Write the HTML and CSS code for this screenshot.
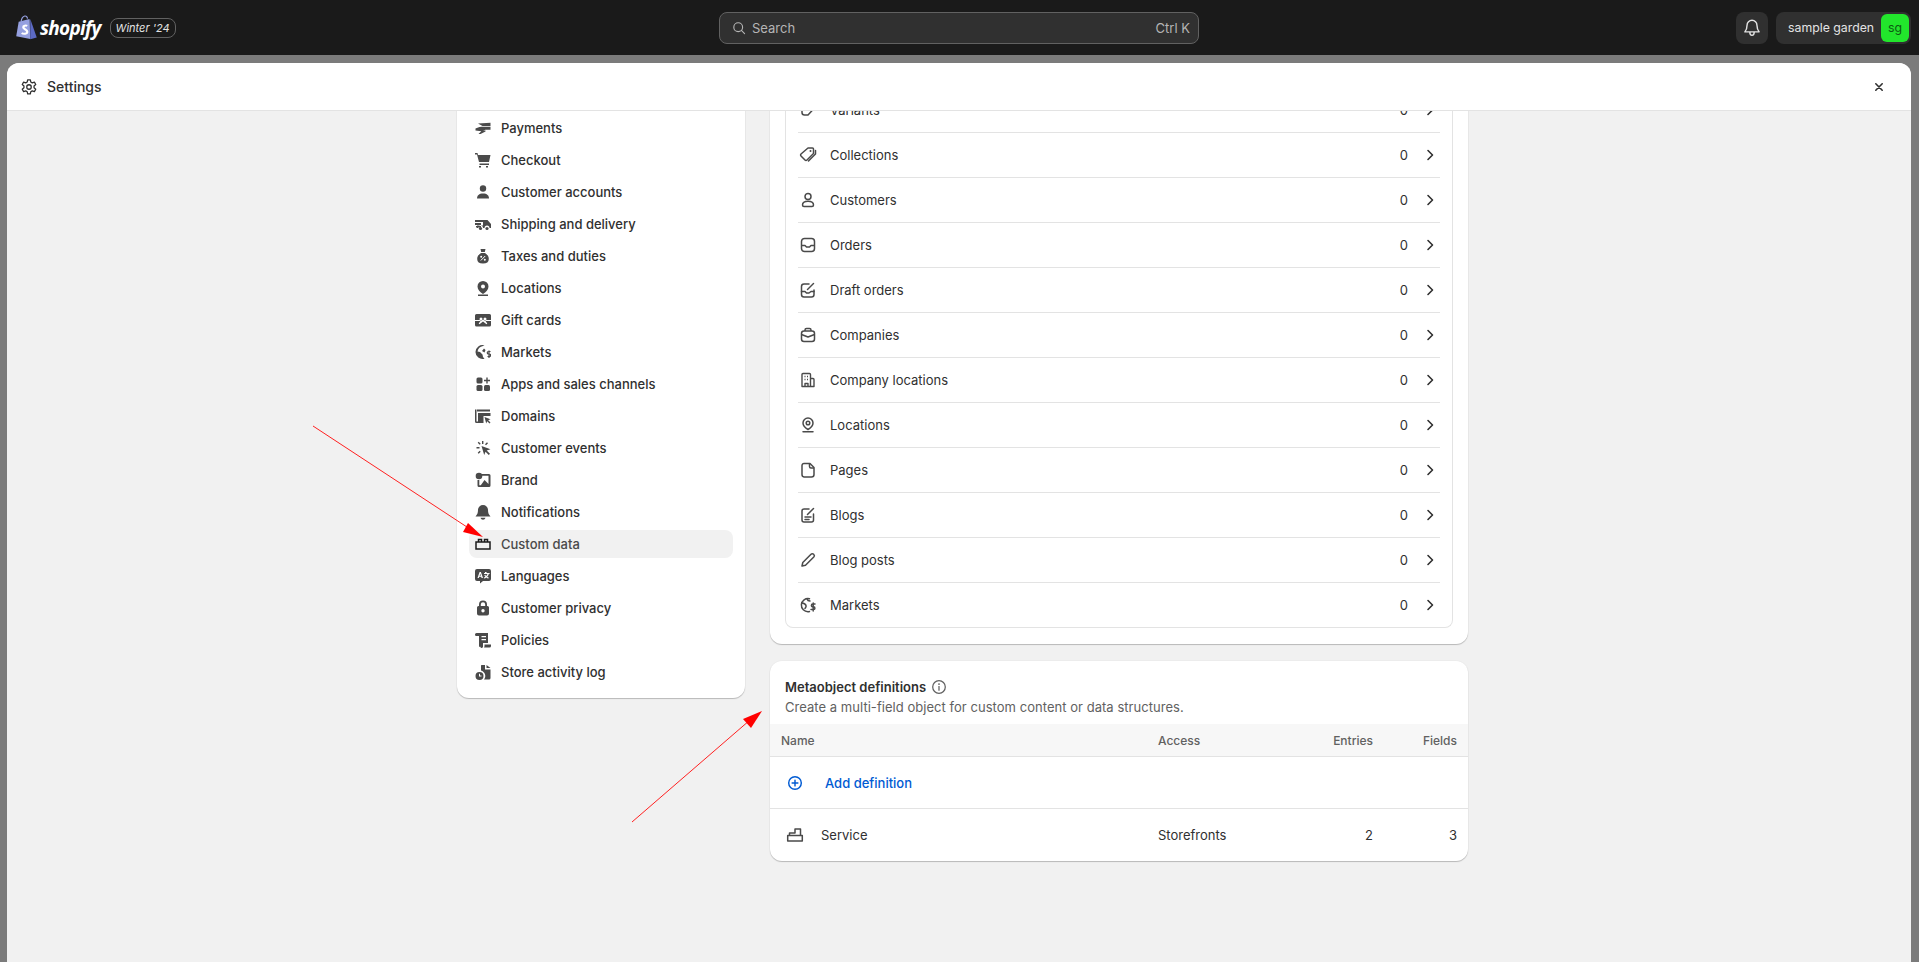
FILE: index.html

```html
<!DOCTYPE html>
<html lang="en">
<head>
  <meta charset="UTF-8" />
  <title>Settings - Custom data</title>
  <link rel="stylesheet" href="styles.css">
</head>
<body>
  <svg width="0" height="0" class="defs">
    <symbol id="i-chev" viewBox="0 0 20 20"><path d="M8 5.500l4.500 4.500-4.500 4.500" fill="none" stroke="#303030" stroke-width="1.600" stroke-linecap="round" stroke-linejoin="round"/></symbol>
    <symbol id="i-market" viewBox="0 0 20 20"><g fill="none" stroke="#4a4a4a" stroke-width="1.500" stroke-linecap="round" stroke-linejoin="round"><path d="M11.500 3.700a6.600 6.600 0 1 0-1 13 6.600 6.600 0 0 0 1-.2"/><path d="M4 8c2 .2 3.500 1 4 2.500s-.5 2-1 3M9 4c.5 1.500 1.500 2 3 2"/><path d="M17 9h-2.200a1.300 1.300 0 0 0 0 2.800h.7a1.300 1.300 0 0 1 0 2.800H13M15.200 8v8"/></g></symbol>
  </svg>

  <header class="topbar">
    <div class="brand">
      <svg class="bag" viewBox="0 0 18 24" width="22" height="25" preserveAspectRatio="none"><path d="M1 20.500L3 6.500l8-2.500 1 0 .5 19z" fill="#95a0e0"/><path d="M12.500 3.800L17.800 21.500l-5.300 1.800z" fill="#5c6ac4"/><path d="M5 6c.3-2 1.500-4.500 3-5 1.500-.3 2 1 2.300 2.500" fill="none" stroke="#95a0e0" stroke-width="1"/><path d="M10 10.500c-1-.5-3.200-.6-3.200 1.300 0 2 3.200 2 3.200 4.200 0 2.200-3 2.500-4.500 1.300" fill="none" stroke="#fff" stroke-width="1.900"/></svg>
      <span class="wordmark">shopify</span>
      <span class="edition">Winter '24</span>
    </div>
    <div class="search">
      <svg viewBox="0 0 20 20" width="16" height="16"><circle cx="9" cy="9" r="5.500" fill="none" stroke="#b5b5b5" stroke-width="1.400"/><path d="M13 13l4 4" stroke="#b5b5b5" stroke-width="1.400" stroke-linecap="round"/></svg>
      <span class="search-text">Search</span>
      <span class="search-key">Ctrl K</span>
    </div>
    <div class="top-actions">
      <button class="bell">
        <svg viewBox="0 0 20 20" width="22" height="22"><path d="M10 3a4.500 4.500 0 0 0-4.500 4.500c0 3-.7 4.500-2 6h13c-1.300-1.500-2-3-2-6A4.500 4.500 0 0 0 10 3zM8 13.700c0 1.800.8 3 2 3s2-1.200 2-3" fill="none" stroke="#e3e3e3" stroke-width="1.300" stroke-linejoin="round"/></svg>
      </button>
      <div class="store">
        <span>sample garden</span>
        <span class="avatar">sg</span>
      </div>
    </div>
  </header>

  <main class="modal">
    <div class="modal-head">
      <svg viewBox="0 0 20 20" width="18" height="18"><g fill="none" stroke="#303030" stroke-width="1.400" stroke-linejoin="round"><circle cx="10" cy="10" r="2.500"/><path d="M8.500 2h3l.5 2.500 1.600.9 2.400-.8 1.500 2.600-1.900 1.700v1.900l1.900 1.700-1.500 2.600-2.400-.8-1.600.9-.5 2.500h-3l-.5-2.500-1.600-.9-2.400.8-1.500-2.600 1.900-1.700V8.900L2.500 7.200 4 4.600l2.400.8L8 4.500z"/></g></svg>
      <h1>Settings</h1>
      <svg class="close" viewBox="0 0 20 20" width="16" height="16"><path d="M6 6l8 8M14 6l-8 8" stroke="#303030" stroke-width="2" stroke-linecap="round"/></svg>
    </div>

    <div class="modal-body">
      <div class="columns">
        <nav class="side card">
          <a class="side-item"><svg viewBox="0 0 16 16"><path d="M3 3.500L15.500 2.700V6H7.500zM.5 8.500C3 7 6 6.700 9 6.700h6.500v3H10.500L8 10.500h2.500v1L5.500 14H3.500l2.800-2.800-5.800-.7z"/></svg>Payments</a>
          <a class="side-item"><svg viewBox="0 0 16 16"><path d="M0 1h2.500l.5 2h12.500l-1.500 7H4L2 2.500H0zM4.500 11.500H14V13H4.500zM4 14h2v1.500H4zM11 14h2v1.500h-2z"/></svg>Checkout</a>
          <a class="side-item"><svg viewBox="0 0 16 16"><circle cx="8" cy="4.500" r="3.200"/><path d="M2 14.500c0-3 2-5 6-5s6 2 6 5z"/></svg>Customer accounts</a>
          <a class="side-item"><svg viewBox="0 0 16 16"><path d="M0 4h10v2H0zM0 7h6v2H0zM1 10h5v1.500H1zM10 4h2.500L16 8v4h-1.500a2.500 2.500 0 0 0-5 0H8a2.500 2.500 0 0 0-5 0H2V9.500h6V6h2z"/><circle cx="5.500" cy="12.500" r="1.600"/><circle cx="12" cy="12.500" r="1.600"/></svg>Shipping and delivery</a>
          <a class="side-item"><svg viewBox="0 0 16 16"><path d="M5.500 1h5L9.800 4H6.200zM6 5h4c2.500 1.500 3.800 3.500 3.800 6 0 3-2 4.500-5.800 4.500S2.200 14 2.200 11C2.200 8.500 3.500 6.500 6 5z"/><path d="M5.800 12.500l4.400-4.500" stroke="#fff" stroke-width="1"/><circle cx="6.200" cy="8.800" r="1" fill="#fff"/><circle cx="9.800" cy="11.800" r="1" fill="#fff"/></svg>Taxes and duties</a>
          <a class="side-item"><svg viewBox="0 0 16 16"><path fill-rule="evenodd" d="M8 1a5.500 5.500 0 0 1 5.500 5.500c0 3-2.500 5.500-5.500 7.500-3-2-5.500-4.500-5.500-7.500A5.500 5.500 0 0 1 8 1zm0 3.500a2 2 0 1 0 0 4 2 2 0 0 0 0-4z"/><path d="M3 14.500h10V16H3z"/></svg>Locations</a>
          <a class="side-item"><svg viewBox="0 0 16 16"><path fill-rule="evenodd" d="M1.500 2H14.500A1.500 1.500 0 0 1 16 3.500V13a1.500 1.500 0 0 1-1.500 1.500H1.500A1.500 1.500 0 0 1 0 13V3.500A1.500 1.500 0 0 1 1.500 2zM6 5.500a1.500 1.500 0 1 0 0 3 1.500 1.500 0 0 0 0-3zm4 0a1.500 1.500 0 1 0 0 3 1.500 1.500 0 0 0 0-3zM0 8v1h5.500l-1.800 2.500.8.700L8 9.500l3.500 2.700.8-.7L10.500 9H16V8z"/></svg>Gift cards</a>
          <a class="side-item"><svg viewBox="0 0 16 16"><path d="M9.500 1.300a7 7 0 1 0 0 13.400L8 13l-.5-2.500L5 8 2.500 7.500C3 4.500 5 2.500 8 2zM9 4.500l-2 2.500 2.500 1.500 1-2.500z"/><path d="M15.500 7.500h-2a1 1 0 0 0 0 2.500h.8a1 1 0 0 1 0 2.500H12.500M14 6.500V14" fill="none" stroke="#4a4a4a" stroke-width="1.200"/></svg>Markets</a>
          <a class="side-item"><svg viewBox="0 0 16 16"><rect x="1.500" y="1.500" width="6" height="6" rx="1.500"/><rect x="1.500" y="9" width="6" height="6" rx="1.500"/><rect x="9" y="9" width="6" height="6" rx="1.500"/><path d="M11.300 1.500h1.400v2.300H15v1.400h-2.300v2.300h-1.400V5.200H9V3.800h2.300z"/></svg>Apps and sales channels</a>
          <a class="side-item"><svg viewBox="0 0 16 16"><path d="M2 1.500h13v2H2zM0 1.500h1.500v12H4V15H1.500A1.500 1.500 0 0 1 0 13.500zM3 5h12.500v3H8.500v7H4.500A1.500 1.500 0 0 1 3 13.500z"/><path d="M9.500 9l6 2.200-2.300 1 2.300 2.300-1 1-2.300-2.300-1 2.300z"/></svg>Domains</a>
          <a class="side-item"><svg viewBox="0 0 16 16"><path d="M6.500 6l9 3.200-3.800 1.300 3.300 3.300-1.200 1.200-3.300-3.300L9.200 15zM7 1h1.400v3H7zM1.500 7h3v1.400h-3zM2.700 2.700l1-1 2 2-1 1zM2.700 12.700l2-2 1 1-2 2zM12 2.200l1 1-2 2-1-1z"/></svg>Customer events</a>
          <a class="side-item"><svg viewBox="0 0 16 16"><path fill-rule="evenodd" d="M6 2h8a1.500 1.500 0 0 1 1.500 1.500v10A1.500 1.500 0 0 1 14 15H4a1.500 1.500 0 0 1-1.500-1.500V8h1.800v5.200h1.500L9.500 8l4 4V3.800H7z"/><circle cx="4" cy="4" r="3.300"/></svg>Brand</a>
          <a class="side-item"><svg viewBox="0 0 16 16"><path d="M8 1a5 5 0 0 1 5 5c0 3 .8 4.500 2.500 6.500h-15C2.200 10.500 3 9 3 6a5 5 0 0 1 5-5zM5.500 13.800h5c-.4 1.300-1.300 2-2.500 2s-2.100-.7-2.500-2z"/></svg>Notifications</a>
          <a class="side-item active"><svg viewBox="0 0 16 16"><path d="M1 6h14v7H1zM3.500 5.500V3.500h3v2M9.500 5.500V3.500h3v2" fill="none" stroke="#1a1a1a" stroke-width="1.500"/></svg>Custom data</a>
          <a class="side-item"><svg viewBox="0 0 16 16"><path fill-rule="evenodd" d="M2 1h12a2 2 0 0 1 2 2v8a2 2 0 0 1-2 2H8l-3 2.500V13H2a2 2 0 0 1-2-2V3a2 2 0 0 1 2-2zm2.600 3L2.500 10h1.300l.4-1.200h2l.4 1.200H8L5.900 4zm.7 1.800l.6 2H4.600zM10 4v1H9v1h3.500c-.3.800-.8 1.500-1.300 2-.4-.3-.7-.7-1-1.200l-.9.400c.3.600.7 1.100 1.100 1.500-.5.400-1 .6-1.600.8l.4 1c.8-.3 1.500-.6 2.100-1.100.6.500 1.300.8 2.100 1.100l.4-1c-.6-.2-1.100-.4-1.600-.8.700-.7 1.300-1.600 1.600-2.700h.8V5h-3V4z"/></svg>Languages</a>
          <a class="side-item"><svg viewBox="0 0 16 16"><path fill-rule="evenodd" d="M8 .5a4 4 0 0 1 4 4V6h.5A1.500 1.500 0 0 1 14 7.500v6a2 2 0 0 1-2 2H4a2 2 0 0 1-2-2v-6A1.500 1.500 0 0 1 3.500 6H4V4.500a4 4 0 0 1 4-4zm0 1.800a2.200 2.200 0 0 0-2.200 2.200V6h4.400V4.500A2.200 2.200 0 0 0 8 2.300zM8 9a1.700 1.700 0 1 0 0 3.400A1.700 1.700 0 0 0 8 9z"/></svg>Customer privacy</a>
          <a class="side-item"><svg viewBox="0 0 16 16"><path fill-rule="evenodd" d="M1.500 1H13v10H8v3.500a1.300 1.300 0 0 1-2.600.2H4V4H1.800A1.500 1.500 0 0 1 0 2.500 1.500 1.500 0 0 1 1.500 1zM6.500 4v1.300h4.500V4zm0 3v1.300h4.500V7zM9.500 12.500H16V14a1.500 1.500 0 0 1-1.500 1.500H9a3 3 0 0 0 .5-1.500z"/></svg>Policies</a>
          <a class="side-item"><svg viewBox="0 0 16 16"><path d="M6.500 1H10v4.500h5.500V14A1.500 1.500 0 0 1 14 15.500H9a5.500 5.500 0 0 0-3-8.900V1.500zM11.500 1l4 3h-4z"/><path fill-rule="evenodd" d="M4.500 8a4 4 0 1 1 0 8 4 4 0 0 1 0-8zM4 9.800v2.700h2.500v-1H5V9.800z"/></svg>Store activity log</a>
        </nav>

        <section class="content">
          <div class="card counts">
            <div class="count-box">
              <div class="count-row"><svg class="ico" viewBox="0 0 20 20"><path d="M4 5l7-1.500 5 5-6 6.500H6.500A2.500 2.500 0 0 1 4 12.500z" fill="none" stroke="#4a4a4a" stroke-width="1.500"/></svg><span class="count-name">Variants</span><span class="count-num">0</span><svg class="chev"><use href="#i-chev"/></svg></div>
              <div class="count-row"><svg class="ico" viewBox="0 0 20 20"><g fill="none" stroke="#4a4a4a" stroke-width="1.500" stroke-linejoin="round" stroke-linecap="round"><path d="M10 3h4.500a1 1 0 0 1 1 1v4.500l-6.500 6.500a1.400 1.400 0 0 1-2 0L3 11a1.400 1.400 0 0 1 0-2z"/><path d="M17.500 5.500v3.500l-7 7"/></g><circle cx="12.500" cy="6" r="1" fill="#4a4a4a"/></svg><span class="count-name">Collections</span><span class="count-num">0</span><svg class="chev"><use href="#i-chev"/></svg></div>
              <div class="count-row"><svg class="ico" viewBox="0 0 20 20"><g fill="none" stroke="#4a4a4a" stroke-width="1.500" stroke-linejoin="round"><circle cx="10" cy="6.500" r="3"/><path d="M4.500 15c0-2.500 2.500-3.800 5.500-3.800s5.500 1.300 5.500 3.800c0 1-.7 1.500-1.500 1.500H6c-.8 0-1.500-.5-1.500-1.500z"/></g></svg><span class="count-name">Customers</span><span class="count-num">0</span><svg class="chev"><use href="#i-chev"/></svg></div>
              <div class="count-row"><svg class="ico" viewBox="0 0 20 20"><g fill="none" stroke="#4a4a4a" stroke-width="1.500" stroke-linejoin="round"><rect x="3.500" y="3.500" width="13" height="13" rx="3"/><path d="M3.500 10.500h3.500l1.500 1.500h3l1.500-1.500h3.500"/></g></svg><span class="count-name">Orders</span><span class="count-num">0</span><svg class="chev"><use href="#i-chev"/></svg></div>
              <div class="count-row"><svg class="ico" viewBox="0 0 20 20"><g fill="none" stroke="#4a4a4a" stroke-width="1.500" stroke-linejoin="round" stroke-linecap="round"><path d="M11 4H6a2.500 2.500 0 0 0-2.500 2.500v8A2.500 2.500 0 0 0 6 17h7.500a2.500 2.500 0 0 0 2.500-2.500V10"/><path d="M3.500 11.500H7l1.500 1.500h2.500l2-1.500h3"/><path d="M9.500 9.500L15.500 3.500"/></g></svg><span class="count-name">Draft orders</span><span class="count-num">0</span><svg class="chev"><use href="#i-chev"/></svg></div>
              <div class="count-row"><svg class="ico" viewBox="0 0 20 20"><g fill="none" stroke="#4a4a4a" stroke-width="1.500" stroke-linejoin="round"><rect x="3.500" y="6" width="13" height="10.500" rx="2.500"/><path d="M7 6V5a1.500 1.500 0 0 1 1.500-1.500h3A1.500 1.500 0 0 1 13 5v1M3.500 9.500L10 12l6.500-2.500"/></g></svg><span class="count-name">Companies</span><span class="count-num">0</span><svg class="chev"><use href="#i-chev"/></svg></div>
              <div class="count-row"><svg class="ico" viewBox="0 0 20 20"><g fill="none" stroke="#4a4a4a" stroke-width="1.400" stroke-linejoin="round"><path d="M4 16.500V4.500a1 1 0 0 1 1-1h6.500a1 1 0 0 1 1 1v12zM12.500 8.500h2.500a1 1 0 0 1 1 1v7h-3.500M7 16.500v-3h3v3M6.500 6.500h1M9 6.500h1M6.500 9.500h1M9 9.500h1"/></g></svg><span class="count-name">Company locations</span><span class="count-num">0</span><svg class="chev"><use href="#i-chev"/></svg></div>
              <div class="count-row"><svg class="ico" viewBox="0 0 20 20"><g fill="none" stroke="#4a4a4a" stroke-width="1.500" stroke-linejoin="round" stroke-linecap="round"><path d="M10 3a5 5 0 0 1 5 5c0 2.500-2 4.700-5 6.500C7 12.700 5 10.500 5 8a5 5 0 0 1 5-5z"/><circle cx="10" cy="8" r="1.800"/><path d="M5 16.800h10"/></g></svg><span class="count-name">Locations</span><span class="count-num">0</span><svg class="chev"><use href="#i-chev"/></svg></div>
              <div class="count-row"><svg class="ico" viewBox="0 0 20 20"><g fill="none" stroke="#4a4a4a" stroke-width="1.500" stroke-linejoin="round"><path d="M6 3.500h6l4 4v7A2.500 2.500 0 0 1 13.500 17h-7.500A2.500 2.500 0 0 1 4 14.500V5.500a2 2 0 0 1 2-2z"/><path d="M11.500 3.500v3a1.500 1.500 0 0 0 1.500 1.500h3"/></g></svg><span class="count-name">Pages</span><span class="count-num">0</span><svg class="chev"><use href="#i-chev"/></svg></div>
              <div class="count-row"><svg class="ico" viewBox="0 0 20 20"><g fill="none" stroke="#4a4a4a" stroke-width="1.500" stroke-linejoin="round" stroke-linecap="round"><path d="M11 4H6a2 2 0 0 0-2 2v9a2 2 0 0 0 2 2h7.500a2 2 0 0 0 2-2v-6"/><path d="M9.500 9.500L15.500 3.500M7 12h6M7 14.500h4"/></g></svg><span class="count-name">Blogs</span><span class="count-num">0</span><svg class="chev"><use href="#i-chev"/></svg></div>
              <div class="count-row"><svg class="ico" viewBox="0 0 20 20"><path d="M4 16l.8-3.500L13 4.300a1.800 1.800 0 0 1 2.600 0l.2.200a1.800 1.800 0 0 1 0 2.500L7.500 15.200z" fill="none" stroke="#4a4a4a" stroke-width="1.500" stroke-linejoin="round"/></svg><span class="count-name">Blog posts</span><span class="count-num">0</span><svg class="chev"><use href="#i-chev"/></svg></div>
              <div class="count-row"><svg class="ico"><use href="#i-market"/></svg><span class="count-name">Markets</span><span class="count-num">0</span><svg class="chev"><use href="#i-chev"/></svg></div>
            </div>
          </div>

          <div class="card meta">
            <div class="meta-head">
              <h2>Metaobject definitions
                <svg viewBox="0 0 20 20" width="18" height="18"><circle cx="10" cy="10" r="7" fill="none" stroke="#616161" stroke-width="1.400"/><circle cx="10" cy="6.800" r="1" fill="#616161"/><path d="M10 9.500v4" stroke="#616161" stroke-width="1.400" stroke-linecap="round"/></svg>
              </h2>
              <p>Create a multi-field object for custom content or data structures.</p>
            </div>
            <div class="meta-row meta-labels">
              <span class="col-name">Name</span><span class="col-access">Access</span><span class="col-entries">Entries</span><span class="col-fields">Fields</span>
            </div>
            <a class="add-row">
              <svg viewBox="0 0 20 20" width="18" height="18"><circle cx="10" cy="10" r="7" fill="none" stroke="#005bd3" stroke-width="1.600"/><path d="M10 6.800v6.400M6.800 10h6.400" stroke="#005bd3" stroke-width="1.600" stroke-linecap="round"/></svg>
              Add definition
            </a>
            <div class="meta-row service">
              <span class="col-name"><svg viewBox="0 0 20 20" width="20" height="20"><path d="M2.700 16V10.500h14.600V16zM4.500 10.500V8H10V4h5.500v6.500" fill="none" stroke="#4a4a4a" stroke-width="1.500" stroke-linejoin="round"/></svg>Service</span>
              <span class="col-access">Storefronts</span><span class="col-entries">2</span><span class="col-fields">3</span>
            </div>
          </div>
        </section>
      </div>
    </div>
  </main>

  <!-- annotation arrows drawn on top of the screenshot -->
  <svg class="arrows" width="1919" height="962" viewBox="0 0 1919 962">
    <path d="M313 426L470 529M632 822L750 720" stroke="#ff2020" stroke-width="1" fill="none"/>
    <path d="M483 537L463 532 468 523z" fill="#ff0000"/>
    <path d="M762 711L743 719 751 728z" fill="#ff0000"/>
  </svg>
</body>
</html>
```

FILE: styles.css

```css
* {
  box-sizing: border-box;
}

html, body {
  height: 100%;
}

body {
  margin: 0;
  background: #7b7b7b;
  color: #303030;
  font-family: Inter, "Liberation Sans", sans-serif;
  font-size: 13px;
  display: flex;
  flex-direction: column;
  overflow: hidden;
}

.defs {
  position: absolute;
}

.topbar {
  height: 55px;
  flex: none;
  background: #1a1a1a;
  display: grid;
  grid-template-columns: 704px 480px 1fr;
  align-items: center;
  padding: 0 8px 0 15px;
}

.brand {
  display: flex;
  align-items: center;
}

.wordmark {
  color: #fff;
  font-family: "Open Sans", sans-serif;
  font-weight: 700;
  font-style: italic;
  font-size: 19px;
  letter-spacing: -0.7px;
  margin-left: 3px;
}

.edition {
  margin-left: 9px;
  height: 20px;
  width: 66px;
  border: 1px solid #616161;
  border-radius: 8px;
  color: #e3e3e3;
  font-size: 11px;
  font-style: italic;
  white-space: nowrap;
  display: flex;
  align-items: center;
  justify-content: center;
}

.search {
  height: 32px;
  background: #303030;
  border: 1px solid #616161;
  border-radius: 8px;
  color: #b5b5b5;
  display: flex;
  align-items: center;
  padding: 0 8px 0 11px;
}

.search-text {
  margin-left: 5px;
  flex: 1;
}

.top-actions {
  display: flex;
  justify-content: flex-end;
  gap: 8px;
}

.bell {
  width: 32px;
  height: 32px;
  padding: 0;
  border: 0;
  border-radius: 8px;
  background: #303030;
  display: flex;
  align-items: center;
  justify-content: center;
}

.store {
  width: 135px;
  height: 32px;
  background: #303030;
  border-radius: 8px;
  color: #e3e3e3;
  font-size: 12.3px;
  display: flex;
  align-items: center;
  justify-content: space-between;
  padding: 0 2px 0 12px;
}

.avatar {
  width: 28px;
  height: 28px;
  background: #22e62c;
  border-radius: 6px;
  color: #0c5a12;
  display: flex;
  align-items: center;
  justify-content: center;
}

.modal {
  flex: 1;
  min-height: 0;
  margin: 8px 8px 0 7px;
  background: #f1f1f1;
  border-radius: 12px 12px 0 0;
  display: flex;
  flex-direction: column;
  overflow: hidden;
}

.modal-head {
  height: 48px;
  flex: none;
  background: #fff;
  border-bottom: 1px solid #e3e3e3;
  display: flex;
  align-items: center;
  gap: 9px;
  padding: 0 24px 0 13px;
  position: relative;
  z-index: 1;
}

.modal-head h1 {
  margin: 0;
  font-size: 14px;
  font-weight: 500;
  flex: 1;
}

.modal-body {
  flex: 1;
  min-height: 0;
  overflow: hidden;
  padding-left: 7px;
}

.columns {
  display: flex;
  justify-content: center;
  align-items: flex-start;
  gap: 25px;
  margin-top: -23px;
}

.card {
  background: #fff;
  border-radius: 12px;
  box-shadow: 0 1px 1px rgba(0, 0, 0, 0.22), 0 0 0 1px rgba(0, 0, 0, 0.02);
}

.side {
  width: 288px;
  padding: 26px 12px 12px;
  display: flex;
  flex-direction: column;
  gap: 4px;
}

.side-item {
  height: 28px;
  display: flex;
  align-items: center;
  gap: 10px;
  padding: 0 6px;
  font-weight: 550;
  color: #303030;
  border-radius: 8px;
}

.side-item svg {
  width: 16px;
  height: 16px;
  fill: #4a4a4a;
  flex: none;
}

.side-item.active {
  background: #f1f1f1;
  color: #4a4a4a;
}

.content {
  width: 698px;
  display: flex;
  flex-direction: column;
  gap: 17px;
}

.counts {
  padding: 0 15px 16px;
}

.count-box {
  border: 1px solid #e3e3e3;
  border-top: 0;
  border-radius: 0 0 8px 8px;
  padding: 0 12px;
}

.count-row {
  height: 45px;
  display: flex;
  align-items: center;
  border-bottom: 1px solid #e3e3e3;
  color: #303030;
}

.count-row:last-child {
  height: 44px;
  border-bottom: 0;
}

.ico {
  width: 20px;
  height: 20px;
  flex: none;
  margin-right: 12px;
}

.count-name {
  flex: 1;
}

.count-num {
  margin-right: 12px;
}

.chev {
  width: 20px;
  height: 20px;
  flex: none;
}

.meta-head {
  padding: 17px 15px 8px;
}

.meta-head h2 {
  margin: 0;
  font-size: 13px;
  font-weight: 600;
  display: flex;
  align-items: center;
  gap: 4px;
  height: 18px;
}

.meta-head p {
  margin: 2px 0 0;
  color: #616161;
  line-height: 18px;
  letter-spacing: 0.04px;
}

.meta-row {
  display: flex;
  align-items: center;
  padding: 0 11px;
}

.meta-labels {
  height: 33px;
  background: #f7f7f7;
  border-bottom: 1px solid #e3e3e3;
  color: #616161;
  font-size: 12px;
  font-weight: 500;
}

.col-name {
  width: 377px;
  display: flex;
  align-items: center;
}

.col-access {
  width: 100px;
}

.col-entries {
  width: 115px;
  text-align: right;
}

.col-fields {
  width: 84px;
  text-align: right;
}

.add-row {
  height: 52px;
  display: flex;
  align-items: center;
  gap: 21px;
  padding-left: 16px;
  border-bottom: 1px solid #e3e3e3;
  color: #005bd3;
  font-weight: 500;
}

.service {
  height: 52px;
}

.service svg {
  margin: 0 16px 0 4px;
}

.arrows {
  position: absolute;
  left: 0;
  top: 0;
  pointer-events: none;
}
```
